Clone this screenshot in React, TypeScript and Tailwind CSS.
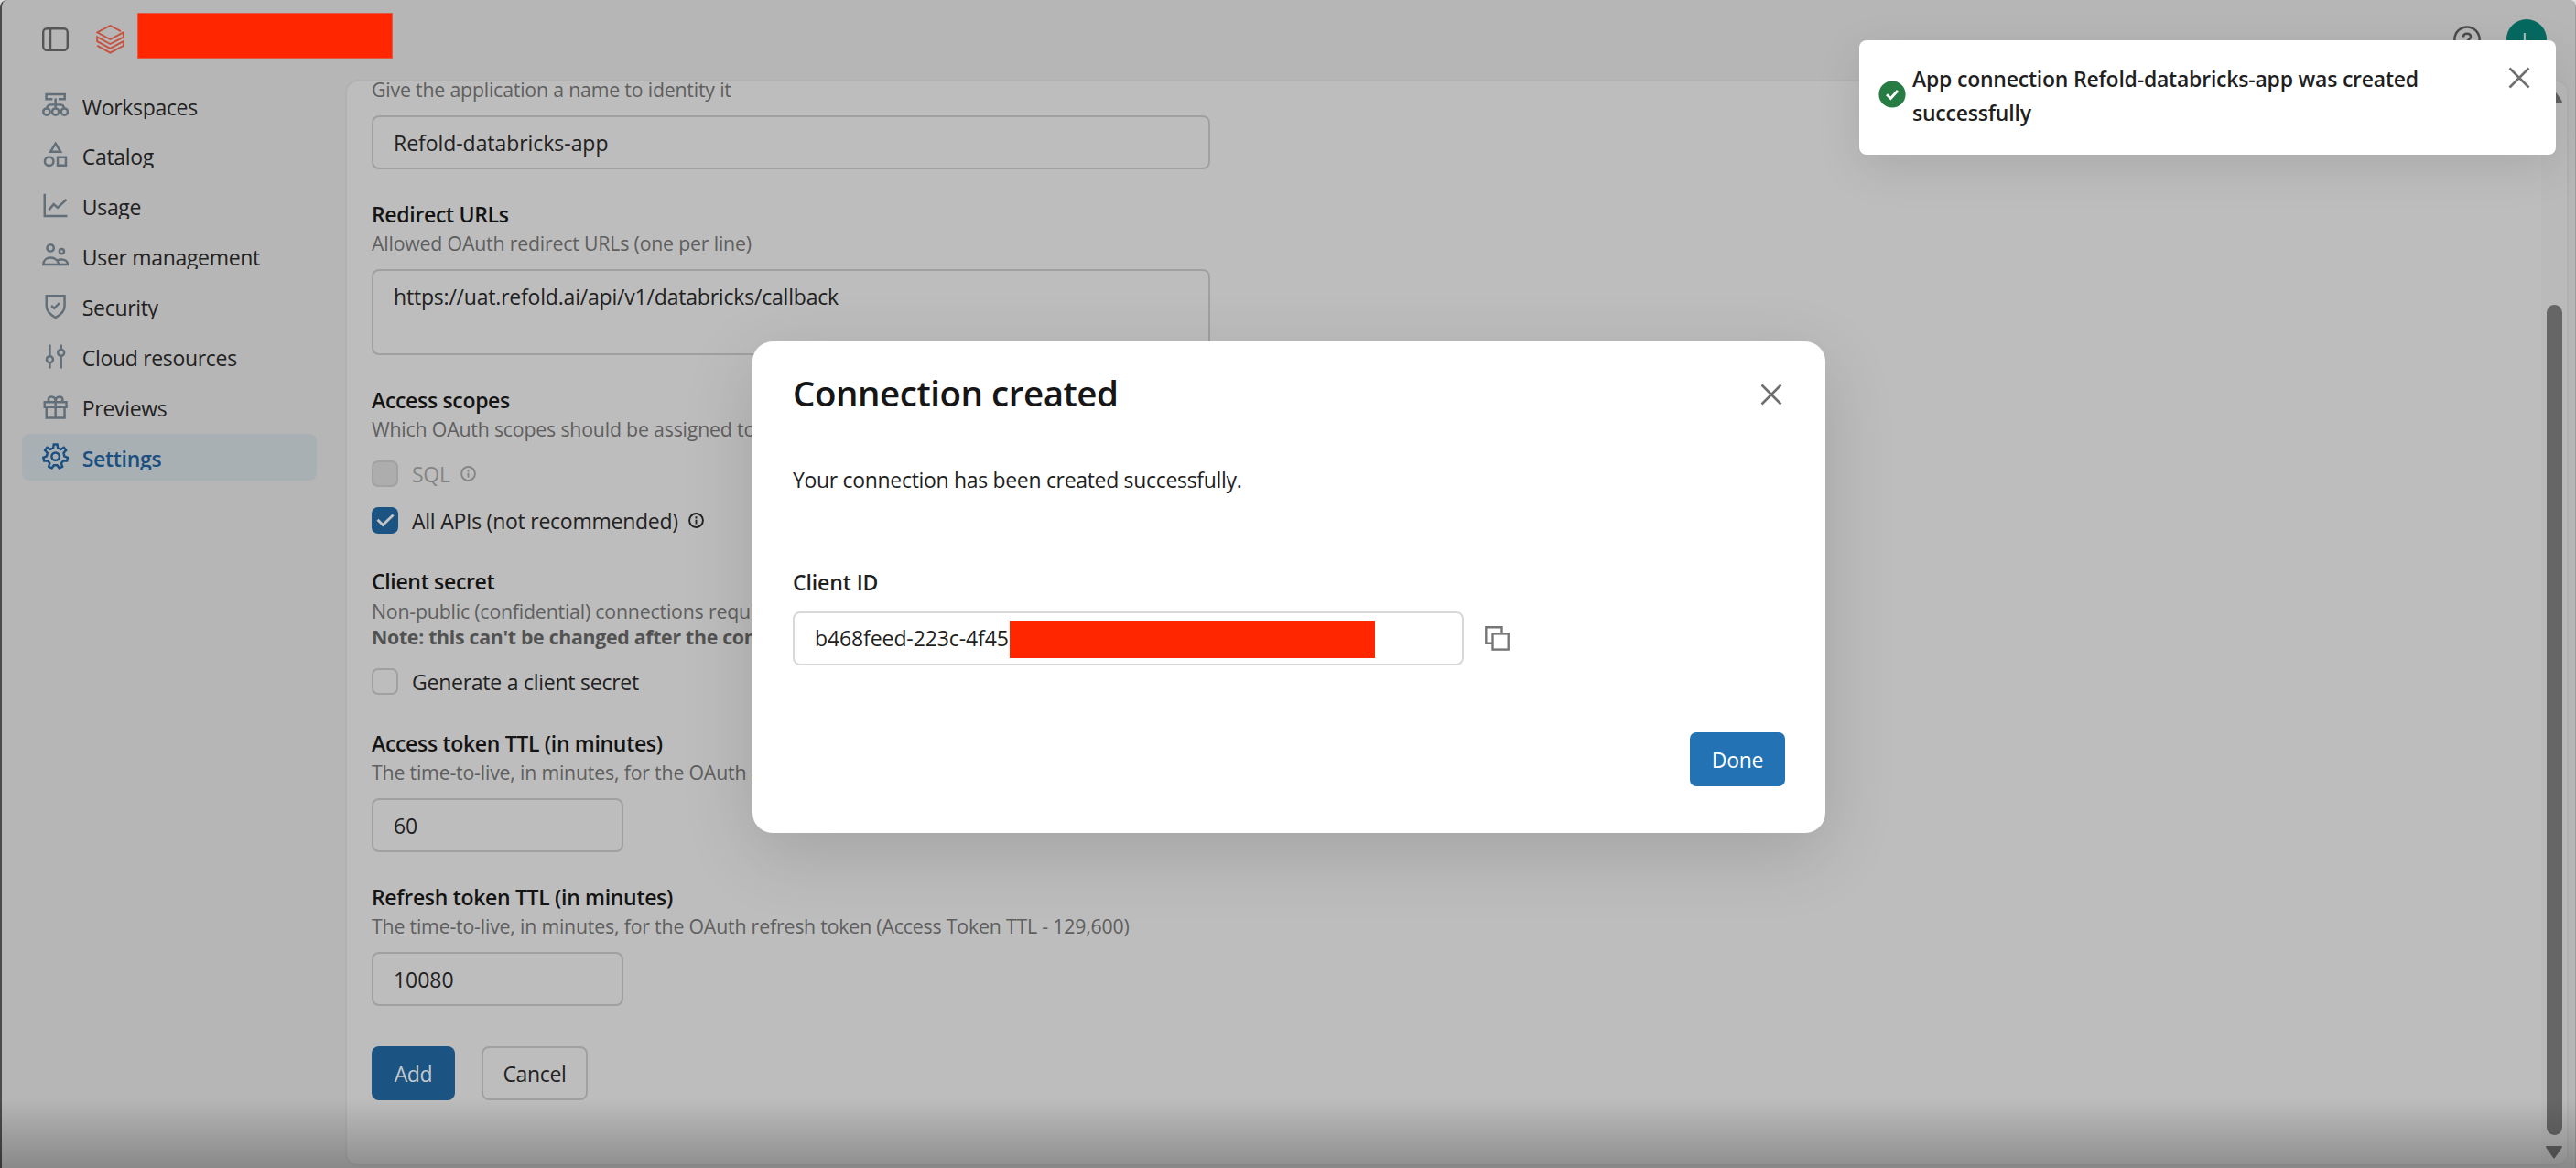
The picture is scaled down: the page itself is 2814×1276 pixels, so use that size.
import type { ReactNode } from "react"

// seven-tooth outline for the settings gear
const gearPath = Array.from({ length: 7 }, (_, i) => {
  const at = (deg: number, r: number) => {
    const a = ((i * 360) / 7 + deg - 90) * (Math.PI / 180)
    return `${(8 + r * Math.cos(a)).toFixed(2)} ${(8 + r * Math.sin(a)).toFixed(2)}`
  }
  return `${i === 0 ? "M" : "L"}${at(-15, 5.3)}L${at(-8, 7.3)}L${at(8, 7.3)}L${at(15, 5.3)}`
}).join("") + "Z"

const navItems: { label: string; active?: boolean; icon: ReactNode }[] = [
  {
    label: "Workspaces",
    icon: (
      <>
        <path d="M6.2 5.1H2.5V2.2H13.5V5.1H9.8" />
        <path d="M8 4.6V10.2M2.9 10.2C3.2 9 4.2 8.4 5.2 8.4H10.8C11.8 8.4 12.8 9 13.1 10.2" />
        <circle cx="2.7" cy="12.6" r="2" />
        <circle cx="8" cy="12.6" r="2" />
        <circle cx="13.3" cy="12.6" r="2" />
      </>
    ),
  },
  {
    label: "Catalog",
    icon: (
      <>
        <path d="M8 1.5L11 6.4H5Z" />
        <circle cx="4.2" cy="12.2" r="2.6" />
        <rect x="9.3" y="9.7" width="4.9" height="4.9" />
      </>
    ),
  },
  {
    label: "Usage",
    icon: (
      <>
        <path d="M1.5 1.5V14.8H15" />
        <path d="M4 11.1L6.9 7.7L9.3 9.8L14.5 4.9" />
      </>
    ),
  },
  {
    label: "User management",
    icon: (
      <>
        <circle cx="5" cy="3.8" r="2" />
        <circle cx="11.7" cy="5.8" r="1.4" />
        <path d="M0.75 13.7C0.75 11.2 2.6 9.6 5 9.6C7.6 9.6 9.6 11.2 10.1 13.7Z" />
        <path d="M8.9 11.2C9.7 10.8 10.7 10.6 11.6 10.6C13.8 10.6 15.3 11.8 15.3 13.7H10" />
      </>
    ),
  },
  {
    label: "Security",
    icon: (
      <>
        <path d="M2.6 2.3H13.4V8.4C13.4 11.8 10.6 13.8 8 15.3C5.4 13.8 2.6 11.8 2.6 8.4Z" />
        <path d="M5.5 8.2L7.2 9.7L10.3 6.6" />
      </>
    ),
  },
  {
    label: "Cloud resources",
    icon: (
      <>
        <path d="M4.6 1.4V8.3M4.6 12.2V15.5M11.3 1.4V4.3M11.3 8.2V15.5" />
        <circle cx="4.6" cy="10.2" r="1.9" />
        <circle cx="11.3" cy="6.2" r="1.9" />
      </>
    ),
  },
  {
    label: "Previews",
    icon: (
      <>
        <path d="M1.5 5.6H14.5V8.6H1.5ZM2.6 8.6V15H13.4V8.6M8 5.6V15" />
        <path d="M8 5.4C8 3.6 7 2.5 5.6 2.5C3.6 2.5 3.3 4.6 4.4 5.4M8 5.4C8 3.6 9 2.5 10.4 2.5C12.4 2.5 12.7 4.6 11.6 5.4" />
      </>
    ),
  },
  {
    label: "Settings",
    active: true,
    icon: (
      <>
        <path d={gearPath} />
        <circle cx="8" cy="8" r="2.3" />
      </>
    ),
  },
]

function InfoIcon() {
  return (
    <svg viewBox="0 0 16 16" className="size-[17px] -mt-px" fill="none" stroke="currentColor" strokeWidth="1.8">
      <circle cx="8" cy="8" r="7" />
      <path d="M8 7.2V11.8M8 4V6" />
    </svg>
  )
}

function CloseIcon() {
  return (
    <svg viewBox="0 0 24 24" className="size-6" fill="none" stroke="#6f6f6f" strokeWidth="2.6">
      <path d="M1.5 1.5L22.5 22.5M22.5 1.5L1.5 22.5" />
    </svg>
  )
}

function FieldHeading({ label, hint }: { label: string; hint: string }) {
  return (
    <div>
      <div className="h-8 pt-px leading-8 font-semibold text-[#141414]">{label}</div>
      <div className="h-8 pt-px leading-8 text-[21.3px] tracking-[-0.19px] text-[#5f5f5f]">{hint}</div>
    </div>
  )
}

function TextBox({ value, wide }: { value: string; wide?: boolean }) {
  return (
    <div
      className={`${wide ? "w-[916px]" : "w-[275px]"} mt-[13px] h-[59px] shrink-0 flex items-center rounded-[8px] border-2 border-[#a0a0a0] px-[22px] pt-[2px] tracking-[-0.05px] text-[#222]`}
    >
      {value}
    </div>
  )
}

function CheckRow({ label, checked, disabled, info }: { label: string; checked?: boolean; disabled?: boolean; info?: boolean }) {
  const box = checked
    ? "bg-[#1b5483] border-[#1b5483]"
    : disabled
      ? "bg-[#adadad] border-[#a2a2a2]"
      : "border-[#a0a0a0]"
  return (
    <div className={`flex h-[29px] items-center ${disabled ? "text-[#858585]" : "text-[#222]"}`}>
      <span className={`flex size-[29px] items-center justify-center rounded-[7px] border-2 ${box}`}>
        {checked && (
          <svg viewBox="0 0 20 15" className="w-5 h-[15px]" fill="none" stroke="#c4c4c4" strokeWidth="2.8">
            <path d="M1.5 6.8L7.3 12.6L18.6 1.5" />
          </svg>
        )}
      </span>
      <span className="ml-[15px] mr-[11px] mt-px tracking-[-0.25px]">{label}</span>
      {info && <InfoIcon />}
    </div>
  )
}

function Sidebar() {
  return (
    <aside className="w-[375px] shrink-0 flex flex-col gap-[3.9px] pl-[22px] pr-[31px] pt-[3px]">
      {navItems.map((item) => (
        <div
          key={item.label}
          className={`flex h-[51px] shrink-0 items-center rounded-[8px] pl-[22px] ${item.active ? "bg-[#a9b0b3] text-[#1b4f80] font-semibold" : "text-[#222]"}`}
        >
          <svg
            viewBox="0 0 16 16"
            className={`size-[29.3px] -mt-[3px] ${item.active ? "text-[#1b4f80]" : "text-[#626f79]"}`}
            fill="none"
            stroke="currentColor"
            strokeWidth="1.35"
          >
            {item.icon}
          </svg>
          <span className="ml-[14.5px] mt-[3px] leading-[25px] overflow-hidden">{item.label}</span>
        </div>
      ))}
    </aside>
  )
}

function TopBar() {
  return (
    <header className="flex h-[87px] shrink-0 items-start pl-[44px] pr-[31px]">
      <svg viewBox="0 0 29 26" className="mt-[30px] w-[29px] h-[26px]" fill="none" stroke="#565656" strokeWidth="2.4">
        <rect x="1.2" y="1.2" width="26.6" height="23.6" rx="4" />
        <path d="M9 1.2V24.8" />
      </svg>
      <svg viewBox="0 0 31 32" className="ml-[30px] mt-[27px] w-[31px] h-8" fill="none" stroke="#c6523f" strokeWidth="1.9">
        <path d="M27 7.1L15.4 1L1.2 8.4L15.4 16L29.8 8.4V13.6L15.4 21L1.2 13.4V18.2L15.4 25.8L29.8 18.2V23L15.4 30.6L1.2 22.8" />
      </svg>
      <div className="ml-[14px] mt-[14px] h-[50px] w-[279px] bg-[#ff2600] border border-[#e05a45]" />
      <div className="ml-auto flex items-start gap-[28px]">
        <svg viewBox="0 0 30 30" className="mt-[28px] size-[30px]" fill="none" stroke="#4a4a4a" strokeWidth="2.5">
          <circle cx="15" cy="15" r="13.6" />
          <path d="M11 12.5C11 10 12.8 8.8 15 8.8C17.3 8.8 19 10.2 19 12.2C19 15 15 15 15 18.5M15 20.5V23.2" />
        </svg>
        <div className="mt-[21px] flex size-11 items-center justify-center rounded-full bg-[#06695f] text-[20px] text-[#c8c8c8]">
          L
        </div>
      </div>
    </header>
  )
}

function ConnectionForm() {
  return (
    <section className="flex-1 mr-[7px] mb-[2px] overflow-hidden rounded-[14px] border-2 border-[#b1b1b1] bg-[#bdbdbd] flex">
      <div className="flex flex-1 flex-col pl-[27px] -mt-[8px]">
        <div className="h-8 shrink-0 pt-px leading-8 text-[21.3px] tracking-[-0.19px] text-[#5f5f5f]">
          Give the application a name to identity it
        </div>
        <TextBox wide value="Refold-databricks-app" />

        <div className="mt-[32px]">
          <FieldHeading label="Redirect URLs" hint="Allowed OAuth redirect URLs (one per line)" />
        </div>
        <div className="mt-[13px] h-[94px] w-[916px] shrink-0 rounded-[8px] border-2 border-[#a0a0a0] px-[22px] pt-[12px] leading-8 tracking-[-0.2px] text-[#222]">
          https://uat.refold.ai/api/v1/databricks/callback
        </div>

        <div className="mt-[32px]">
          <FieldHeading label="Access scopes" hint="Which OAuth scopes should be assigned to this app connection" />
        </div>
        <div className="mt-[19px] flex flex-col gap-[22px]">
          <CheckRow label="SQL" disabled info />
          <CheckRow label="All APIs (not recommended)" checked info />
        </div>

        <div className="mt-[35px] h-8 pt-px leading-8 font-semibold text-[#141414]">Client secret</div>
        <div className="mt-[4px] leading-[28px] text-[21.3px] tracking-[-0.19px] text-[#5f5f5f]">
          <div>Non-public (confidential) connections require a client secret</div>
          <div className="font-bold tracking-[-0.3px] text-[#525252]">
            Note: this can't be changed after the connection is created
          </div>
        </div>
        <div className="mt-[20px]">
          <CheckRow label="Generate a client secret" />
        </div>

        <div className="mt-[36px]">
          <FieldHeading
            label="Access token TTL (in minutes)"
            hint="The time-to-live, in minutes, for the OAuth access token (5 - 1440)"
          />
        </div>
        <TextBox value="60" />

        <div className="mt-[32px]">
          <FieldHeading
            label="Refresh token TTL (in minutes)"
            hint="The time-to-live, in minutes, for the OAuth refresh token (Access Token TTL - 129,600)"
          />
        </div>
        <TextBox value="10080" />

        <div className="mt-[44px] flex gap-[29px]">
          <button className="h-[59px] w-[91px] rounded-[8px] bg-[#1b5483] pt-[2px] text-[#c3c9cd]">Add</button>
          <button className="h-[59px] w-[116px] rounded-[8px] border-2 border-[#a0a0a0] pt-[2px] text-[#222]">Cancel</button>
        </div>
      </div>

      {/* scrollbar gutter */}
      <div className="flex w-[28px] shrink-0 flex-col items-center bg-[#bababa] pt-[9px] pb-[6px]">
        <svg viewBox="0 0 18 14" className="w-[18px] h-[14px] shrink-0" fill="#626262" stroke="#626262" strokeWidth="2" strokeLinejoin="round">
          <path d="M9 1.5L17 13H1Z" />
        </svg>
        <div className="mt-[221px] w-[17px] flex-1 rounded-full bg-[#666]" />
        <svg viewBox="0 0 18 14" className="mt-[12px] w-[18px] h-[14px] shrink-0" fill="#626262" stroke="#626262" strokeWidth="2" strokeLinejoin="round">
          <path d="M9 12.5L17 1H1Z" />
        </svg>
      </div>
    </section>
  )
}

function ConnectionDialog() {
  return (
    <div className="absolute left-[822px] top-[373px] flex h-[537px] w-[1172px] flex-col rounded-[22px] bg-white px-[44px] text-[#1f1f1f] shadow-[0_22px_80px_rgba(0,0,0,0.14)]">
      <div className="mt-[29px] flex h-[58px] items-center justify-between">
        <h2 className="-mt-[4px] text-[38.5px] font-semibold leading-[58px] tracking-[-0.45px] text-[#161616]">
          Connection created
        </h2>
        <div className="mr-[3px]">
          <CloseIcon />
        </div>
      </div>
      <p className="mt-[48px] leading-8">Your connection has been created successfully.</p>
      <div className="mt-[80px] leading-8 font-semibold tracking-[-0.1px]">Client ID</div>
      <div className="mt-[16px] flex items-center">
        <div className="flex h-[59px] w-[733px] items-center rounded-[8px] border-2 border-[#d8d8d8] pl-[22px]">
          <span className="w-[213px] whitespace-nowrap tracking-[-0.1px]">b468feed-223c-4f45</span>
          <span className="mt-px h-[41px] w-[399px] bg-[#ff2600]" />
        </div>
        <svg viewBox="0 0 27 27" className="ml-[23px] size-[27px]" fill="none" stroke="#767676" strokeWidth="2.4">
          <path d="M8.5 18.7H1.3V1.3H18.5V8.4" />
          <rect x="8.5" y="8.4" width="17.2" height="17.2" />
        </svg>
      </div>
      <button className="mt-[73px] h-[59px] w-[104px] self-end rounded-[7px] bg-[#2272b4] pt-px text-white">Done</button>
    </div>
  )
}

function Toast() {
  return (
    <div className="absolute left-[2031px] top-[44px] flex h-[125px] w-[761px] rounded-[8px] bg-white pl-[21px] pr-[28px] text-[#1f1f1f] shadow-[0_14px_50px_rgba(0,0,0,0.1)]">
      <svg viewBox="0 0 30 30" className="mt-[44px] size-[30px] shrink-0" fill="none">
        <circle cx="15" cy="15" r="14.6" fill="#277c43" />
        <path d="M9 15.2L13.4 19.4L21 11" stroke="white" strokeWidth="2.8" />
      </svg>
      <p className="ml-[7px] mt-[24px] w-[600px] font-semibold leading-[36.6px] tracking-[-0.22px]">
        App connection Refold-databricks-app was created successfully
      </p>
      <div className="ml-auto mt-[29px]">
        <CloseIcon />
      </div>
    </div>
  )
}

export default function App() {
  return (
    <div className="relative h-[1276px] w-full overflow-hidden bg-[#dcdcdc] font-['Open_Sans','Noto_Sans',sans-serif] text-[23px] tracking-[-0.32px]">
      <div className="flex h-full flex-col rounded-t-[8px] border-l-2 border-l-[#4a4a4a] border-r border-r-[#a0a0a0] bg-[#b6b6b6]">
        <TopBar />
        <div className="flex min-h-0 flex-1">
          <Sidebar />
          <ConnectionForm />
        </div>
      </div>
      <div className="pointer-events-none absolute inset-x-0 bottom-0 h-[76px] bg-linear-to-b from-black/0 to-black/25" />
      <ConnectionDialog />
      <Toast />
    </div>
  )
}
